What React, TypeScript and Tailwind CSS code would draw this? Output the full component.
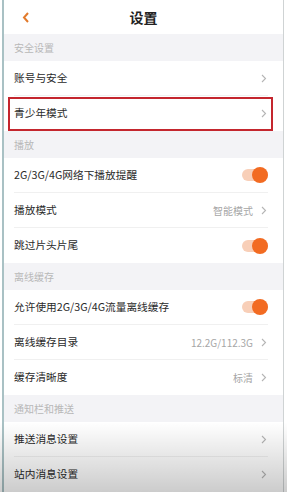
import React from 'react';

type Row = {
  label: string;
  value?: string;
  toggle?: boolean;
  highlight?: boolean;
};

type Section = {
  title: string;
  rows: Row[];
};

const sections: Section[] = [
  {
    title: '安全设置',
    rows: [{ label: '账号与安全' }, { label: '青少年模式', highlight: true }],
  },
  {
    title: '播放',
    rows: [
      { label: '2G/3G/4G网络下播放提醒', toggle: true },
      { label: '播放模式', value: '智能模式' },
      { label: '跳过片头片尾', toggle: true },
    ],
  },
  {
    title: '离线缓存',
    rows: [
      { label: '允许使用2G/3G/4G流量离线缓存', toggle: true },
      { label: '离线缓存目录', value: '12.2G/112.3G' },
      { label: '缓存清晰度', value: '标清' },
    ],
  },
  {
    title: '通知栏和推送',
    rows: [{ label: '推送消息设置' }, { label: '站内消息设置' }],
  },
];

function Chevron() {
  return (
    <svg width="6" height="9" viewBox="0 0 6 9" className="shrink-0">
      <path d="M1 1l3.5 3.5L1 8" fill="none" stroke="#b5b5b5" strokeWidth="1.1" />
    </svg>
  );
}

function Toggle() {
  return (
    <div className="relative w-[26px] h-[16px] flex items-center">
      <div className="w-full h-[12px] rounded-full bg-[#f8cfb8]" />
      <div className="absolute right-0 w-[16px] h-[16px] rounded-full bg-[#f26b22]" />
    </div>
  );
}

function SettingRow({ row, last }: { row: Row; last: boolean }) {
  return (
    <div className="relative h-[35px] bg-white pl-[10px] pr-[15px] flex items-center">
      <div
        className={`flex-1 h-full flex items-center justify-between ${
          last ? '' : 'border-b border-[#f0f0f0]'
        }`}
      >
        <span className="text-[10.7px] text-[#2a2a2a]">{row.label}</span>
        {row.toggle ? (
          <Toggle />
        ) : (
          <span className="flex items-center gap-[8px] pr-[1px]">
            {row.value && <span className="text-[10px] text-[#a6a6a6]">{row.value}</span>}
            <Chevron />
          </span>
        )}
      </div>
      {row.highlight && (
        <div className="absolute left-[4px] right-[10px] top-[1px] bottom-0 border-2 border-[#c4262e]" />
      )}
    </div>
  );
}

export default function App() {
  return (
    <div
      className="relative w-[287px] h-[492px] overflow-hidden bg-white"
      style={{ fontFamily: '"Noto Sans CJK SC", "Noto Sans", sans-serif' }}
    >
      <div className="ml-[2px] mr-[3px] h-full border-l-2 border-[#a9c1c4] border-r border-r-[#cfd3d4] bg-[#f3f3f6]">
        <div className="relative h-[34px] bg-white flex items-center justify-center">
          <svg width="8" height="11" viewBox="0 0 8 11" className="absolute left-[18px]">
            <path d="M6 1L2 5.5 6 10" fill="none" stroke="#e27a2b" strokeWidth="2" />
          </svg>
          <span className="text-[14px] font-bold text-[#222]">设置</span>
        </div>
        {sections.map((s) => (
          <div key={s.title}>
            <div className="h-[27px] pl-[10px] flex items-center text-[10px] text-[#b8b8b8]">
              {s.title}
            </div>
            {s.rows.map((r, i) => (
              <SettingRow key={r.label} row={r} last={i === s.rows.length - 1} />
            ))}
          </div>
        ))}
      </div>
      <div className="absolute inset-x-0 bottom-0 h-[70px] bg-gradient-to-b from-transparent to-black/20 pointer-events-none" />
    </div>
  );
}
